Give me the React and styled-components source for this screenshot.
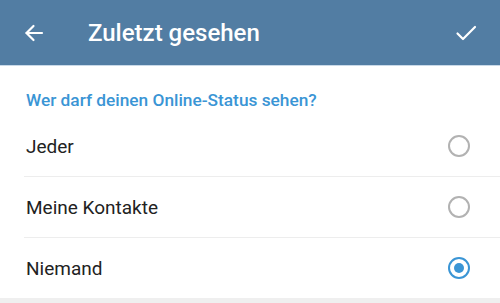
import { useState } from "react";
import styled, { createGlobalStyle } from "styled-components";

const GlobalStyle = createGlobalStyle`
    html, body {
        margin: 0;
        padding: 0;
        background: #efefef;
        font-family: Roboto, "Noto Sans", sans-serif;
    }
`;

const options = ["Jeder", "Meine Kontakte", "Niemand"];

export default function App() {
    const [selected, setSelected] = useState(2);

    return (
        <>
            <GlobalStyle />
            <Page>
                <Header>
                    <IconButton aria-label="back">
                        <svg width="24" height="24" viewBox="0 0 24 24" fill="none" stroke="#fff" strokeWidth="2.2" strokeLinecap="round" strokeLinejoin="round">
                            <path d="M20 12H4.5" />
                            <path d="M11.5 5L4.5 12l7 7" />
                        </svg>
                    </IconButton>
                    <Title>Zuletzt gesehen</Title>
                    <IconButton aria-label="done">
                        <svg width="24" height="24" viewBox="0 0 24 24" fill="none" stroke="#fff" strokeWidth="2.2" strokeLinecap="round" strokeLinejoin="round">
                            <path d="M3.5 12.5l5.5 5.5L21 6" />
                        </svg>
                    </IconButton>
                </Header>
                <List>
                    <SectionTitle>Wer darf deinen Online-Status sehen?</SectionTitle>
                    {options.map((label, i) => (
                        <Row key={label} last={i === options.length - 1} onClick={() => setSelected(i)}>
                            <RowLabel>{label}</RowLabel>
                            <Radio checked={selected === i} />
                        </Row>
                    ))}
                </List>
            </Page>
        </>
    );
}

const Page = styled.div`
    width: 500px;
    height: 303px;
    display: flex;
    flex-direction: column;
    background: #efefef;
    overflow: hidden;
`;

const Header = styled.div`
    height: 65px;
    flex-shrink: 0;
    display: flex;
    align-items: center;
    padding: 0 22px 0 22px;
    background: #527da3;
    border-bottom: 1px solid #c9d9e8;
`;

const IconButton = styled.div`
    width: 24px;
    height: 24px;
    display: flex;
    align-items: center;
    justify-content: center;
    cursor: pointer;
`;

const Title = styled.div`
    flex: 1;
    margin-left: 42px;
    color: #ffffff;
    font-size: 24px;
    font-weight: 500;
`;

const List = styled.div`
    background: #ffffff;
    display: flex;
    flex-direction: column;
`;

const SectionTitle = styled.div`
    padding: 24px 26px 0;
    height: 26px;
    color: #3a95d5;
    font-size: 17.3px;
    font-weight: 500;
`;

const Row = styled.div`
    height: 60px;
    display: flex;
    align-items: center;
    justify-content: space-between;
    margin-left: 24px;
    padding: 0 30px 0 2px;
    border-bottom: ${(props) => props.last ? 'none' : '1px solid #ededed'};
    cursor: pointer;
`;

const RowLabel = styled.div`
    color: #222222;
    font-size: 19px;
`;

const Radio = styled.div`
    width: 18px;
    height: 18px;
    border-radius: 50%;
    border: 2px solid ${(props) => props.checked ? '#3a95d5' : '#b2b2b2'};
    display: flex;
    align-items: center;
    justify-content: center;
    &::after {
        content: "";
        width: 10px;
        height: 10px;
        border-radius: 50%;
        background: #3a95d5;
        display: ${(props) => props.checked ? 'block' : 'none'};
    }
`;
